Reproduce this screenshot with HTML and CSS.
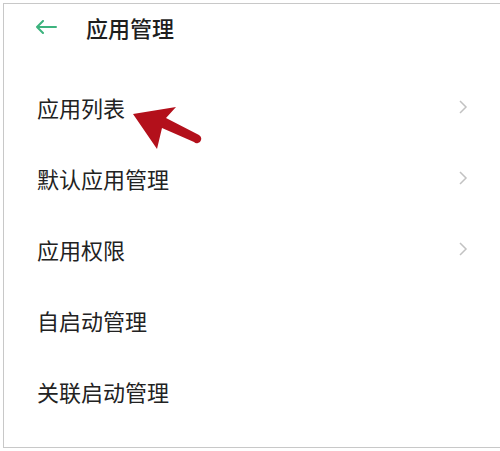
FILE: index.html
```html
<!DOCTYPE html>
<html>
<head>
    <meta charset="utf-8">
    <link rel="stylesheet" href="styles.css">
</head>
<body>
    <div id="frame">
        <div class="header">
            <svg class="back" width="22" height="14" viewBox="0 0 22 14">
                <path d="M21 7H2M8 1L2 7l6 6" fill="none" stroke="#3db37e" stroke-width="2" stroke-linecap="round" stroke-linejoin="round"/>
            </svg>
            <h1>应用管理</h1>
        </div>
        <ul class="list">
            <li class="row">
                <span>应用列表</span>
                <svg class="chev" width="10" height="16" viewBox="0 0 10 16"><path d="M2 2l6 6-6 6" fill="none" stroke="#c2c2c2" stroke-width="1.5"/></svg>
            </li>
            <li class="row">
                <span>默认应用管理</span>
                <svg class="chev" width="10" height="16" viewBox="0 0 10 16"><path d="M2 2l6 6-6 6" fill="none" stroke="#c2c2c2" stroke-width="1.5"/></svg>
            </li>
            <li class="row">
                <span>应用权限</span>
                <svg class="chev" width="10" height="16" viewBox="0 0 10 16"><path d="M2 2l6 6-6 6" fill="none" stroke="#c2c2c2" stroke-width="1.5"/></svg>
            </li>
            <li class="row"><span>自启动管理</span></li>
            <li class="row"><span>关联启动管理</span></li>
        </ul>
        <!-- red pointer drawn over the first row -->
        <svg class="pointer" width="80" height="52" viewBox="0 0 80 52">
            <path d="M1 12 L44 5 L34 16 L67 33 Q71 36 68 40 L66 41 Q64 42 62 40 L30 26 L25 47 Z" fill="#b3101b"/>
        </svg>
    </div>
</body>
</html>
```

FILE: styles.css
```css
body{
    margin:0;
    background:#fff;
    font-family:"Noto Sans CJK SC","Noto Sans",sans-serif;
}
#frame{
    position:relative;
    margin:3px 0 0 3px;
    height:443px;
    border:1px solid #c8c8c8;
    border-right:none;
}
.header{
    display:flex;
    align-items:center;
    box-sizing:border-box;
    height:67px;
    padding:0 0 22px 31px;
}
.back{
    margin-right:29px;
}
h1{
    margin:0;
    font-size:22px;
    font-weight:500;
    color:#1e1e1e;
}
.list{
    list-style:none;
    margin:0;
    padding:0;
}
.row{
    display:flex;
    align-items:center;
    justify-content:space-between;
    height:71px;
    padding:0 32px 0 33px;
    font-size:22px;
    color:#222;
}
.pointer{
    position:absolute;
    left:128px;
    top:98px;
}
```
